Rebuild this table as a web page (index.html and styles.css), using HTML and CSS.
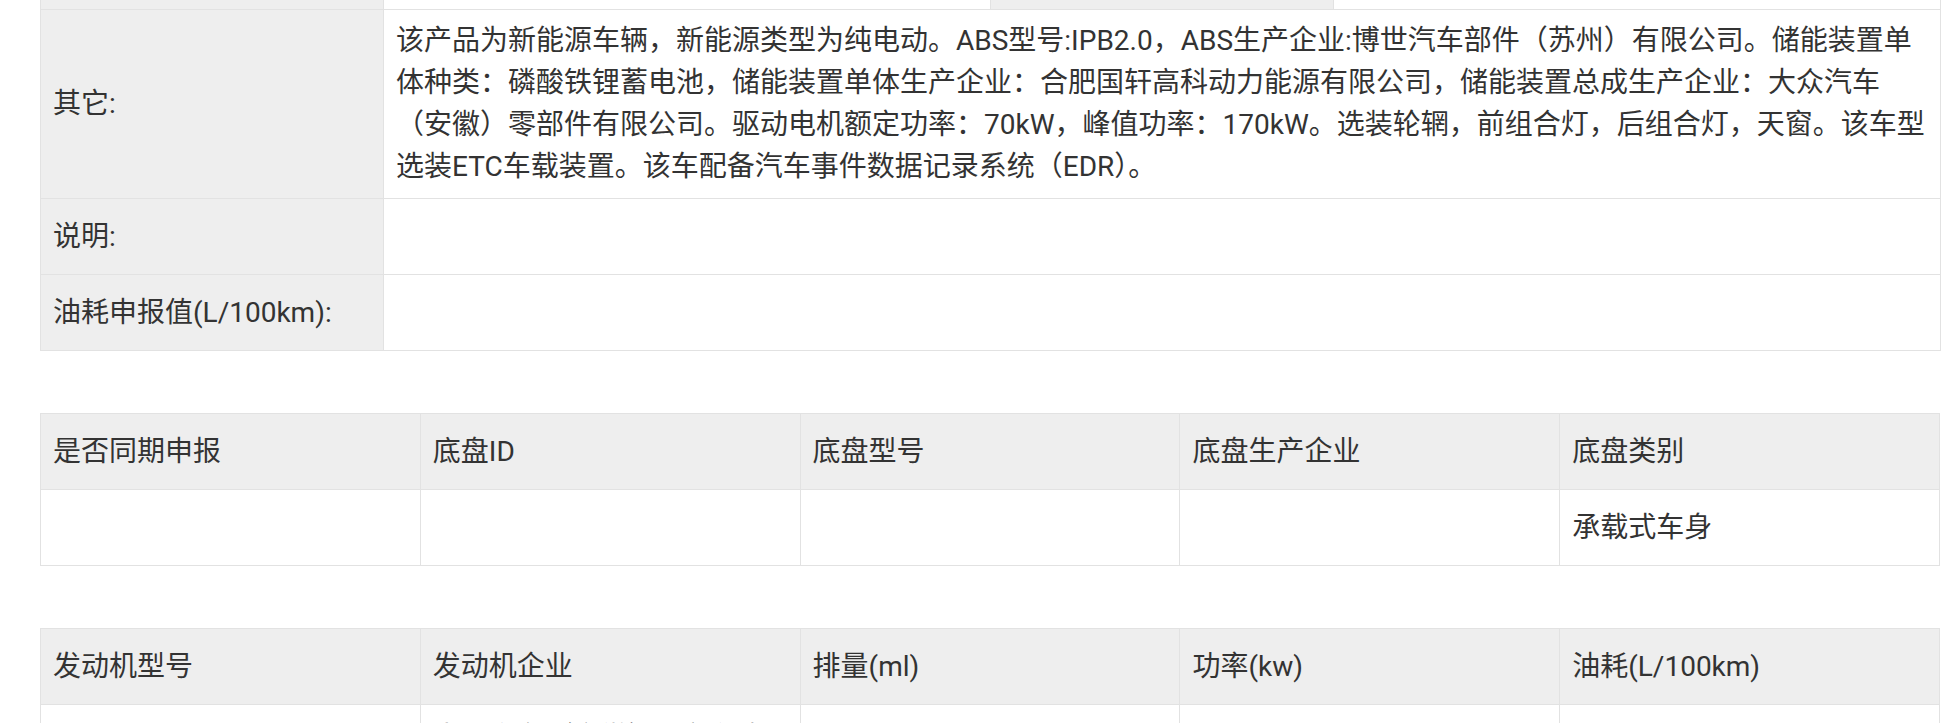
FILE: index.html
```html
<!DOCTYPE html>
<html lang="zh-CN">
<head>
<meta charset="utf-8">
<title>车辆参数</title>
<link rel="stylesheet" href="styles.css">
</head>
<body>
<main class="page">
  <table class="grid info">
    <colgroup>
      <col class="c-label"><col class="c-value"><col class="c-label"><col class="c-value">
    </colgroup>
    <tr class="row-single">
      <th class="label"></th>
      <td></td>
      <th class="label"></th>
      <td></td>
    </tr>
    <tr>
      <th class="label">其它:</th>
      <td colspan="3" class="long">该产品为新能源车辆，新能源类型为纯电动。ABS型号:IPB2.0，ABS生产企业:博世汽车部件（苏州）有限公司。储能装置单体种类：磷酸铁锂蓄电池，储能装置单体生产企业：合肥国轩高科动力能源有限公司，储能装置总成生产企业：大众汽车（安徽）零部件有限公司。驱动电机额定功率：70kW，峰值功率：170kW。选装轮辋，前组合灯，后组合灯，天窗。该车型选装ETC车载装置。该车配备汽车事件数据记录系统（EDR）。</td>
    </tr>
    <tr class="row-single">
      <th class="label">说明:</th>
      <td colspan="3"></td>
    </tr>
    <tr class="row-single">
      <th class="label">油耗申报值(L/100km):</th>
      <td colspan="3"></td>
    </tr>
  </table>

  <table class="grid cols5">
    <tr class="row-single head">
      <th>是否同期申报</th>
      <th>底盘ID</th>
      <th>底盘型号</th>
      <th>底盘生产企业</th>
      <th>底盘类别</th>
    </tr>
    <tr class="row-single">
      <td></td>
      <td></td>
      <td></td>
      <td></td>
      <td>承载式车身</td>
    </tr>
  </table>

  <table class="grid cols5">
    <tr class="row-single head">
      <th>发动机型号</th>
      <th>发动机企业</th>
      <th>排量(ml)</th>
      <th>功率(kw)</th>
      <th>油耗(L/100km)</th>
    </tr>
    <tr class="row-single">
      <td></td>
      <td class="multi">大众汽车（安徽）零部件有限公司</td>
      <td></td>
      <td></td>
      <td></td>
    </tr>
  </table>
</main>
</body>
</html>
```

FILE: styles.css
```css
html, body {
  margin: 0;
  padding: 0;
  background: #ffffff;
}

body {
  font-family: Roboto, "Noto Sans CJK SC", sans-serif;
  font-size: 28px;
  line-height: 42px;
  color: #333333;
}

.page {
  width: 1900px;
  margin: -67px 0 0 40px;
  display: flex;
  flex-direction: column;
  gap: 62px;
}

.grid {
  width: 1900px;
  border-collapse: collapse;
  table-layout: fixed;
}

.grid th,
.grid td {
  border: 1px solid #e2e2e2;
  padding: 10px 8px 10px 12px;
  text-align: left;
  font-weight: 400;
  vertical-align: middle;
}

.grid .label,
.grid .head th {
  background: #eeeeee;
}

.c-label { width: 343px; }
.c-value { width: 607px; }

.row-single {
  height: 76px;
}

.long {
  vertical-align: top;
  padding-top: 11px;
}

.grid td.multi {
  vertical-align: top;
  padding-top: 12px;
}
```
